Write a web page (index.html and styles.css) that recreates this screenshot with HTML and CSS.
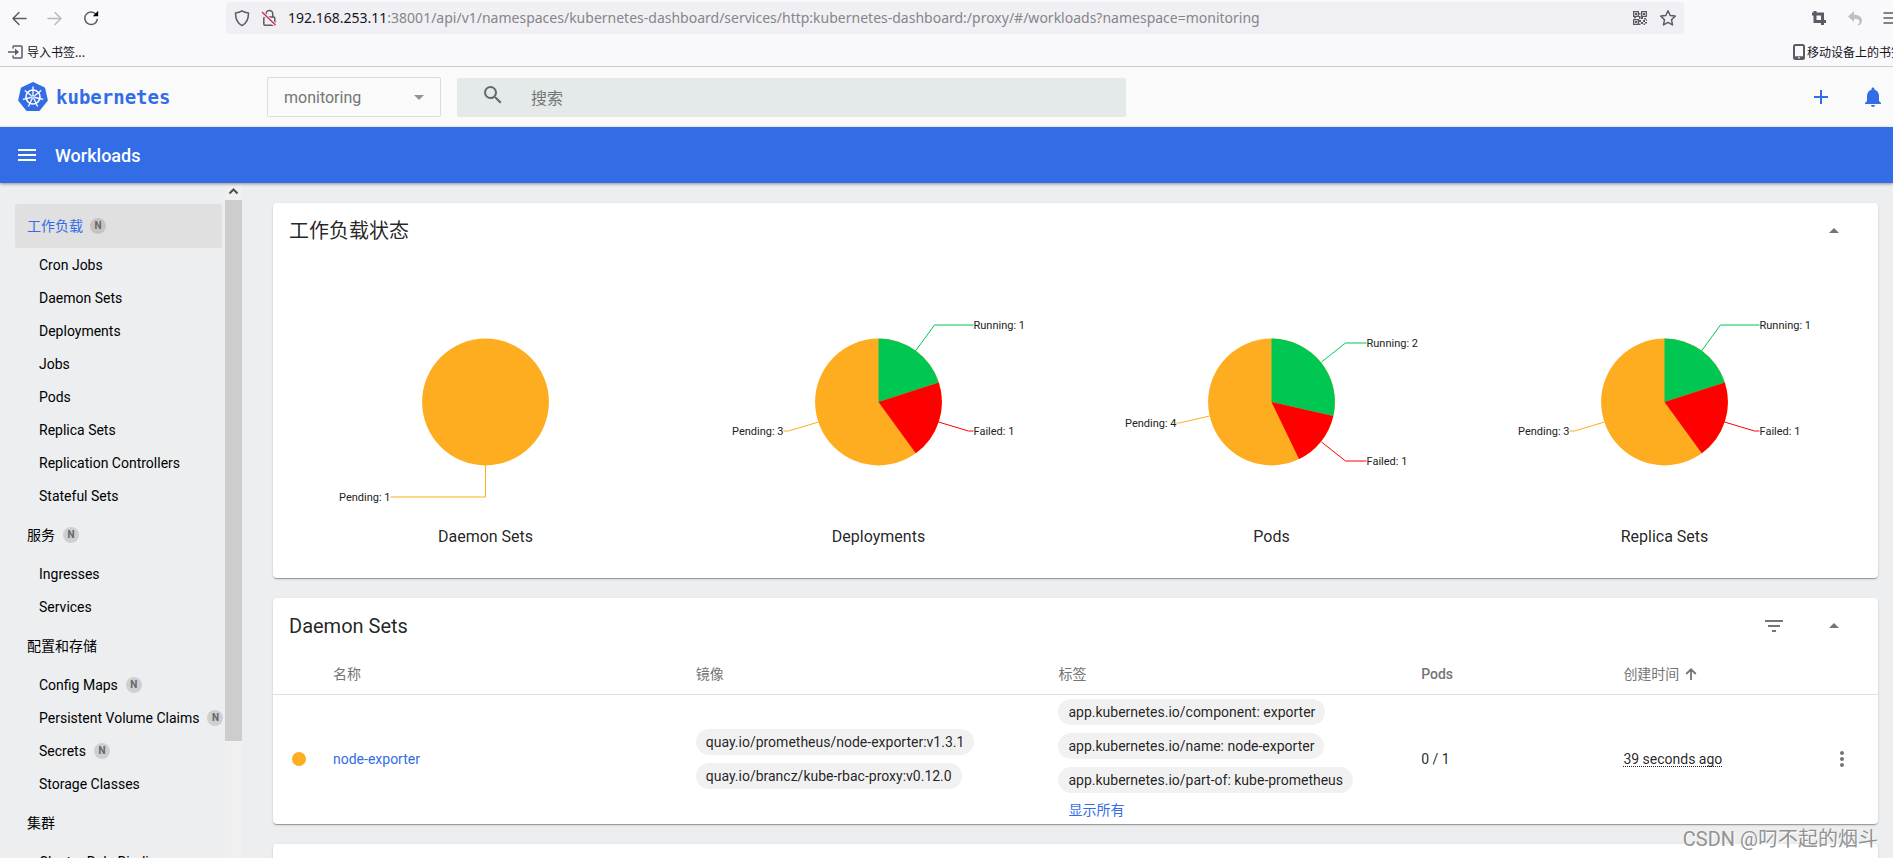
FILE: index.html
```html
<!DOCTYPE html>
<html lang="zh-CN">
<head>
<meta charset="utf-8">
<title>Kubernetes Dashboard</title>
<link rel="stylesheet" href="styles.css">
</head>
<body>
<div class="browser">
  <div class="navbar">
    <div class="nav-buttons">
      <button class="bar-btn" aria-label="后退"><svg width="16" height="16" viewBox="0 0 16 16"><path d="M15 8.500H2M8 2.500l-6 6 6 6" class="line"/></svg></button>
      <button class="bar-btn faded" aria-label="前进"><svg width="16" height="16" viewBox="0 0 16 16"><path d="M1 8.500H14M8 2.500l6 6-6 6" class="line"/></svg></button>
      <button class="bar-btn" aria-label="刷新"><svg width="16" height="16" viewBox="0 0 16 16"><path d="M13 4.200A6.300 6.300 0 1 0 14.300 9.500" class="line"/><path d="M15.200 .8v5.400H9.800z" fill="currentColor"/></svg></button>
    </div>
    <div class="urlbar">
      <svg width="16" height="18" viewBox="0 0 16 18"><path d="M8 1.800c2 1.300 4 1.900 6.500 2.200 0 6-1.700 10.300-6.500 12.700C3.200 14.300 1.500 10 1.500 4 4 3.700 6 3.100 8 1.800z" class="line"/></svg>
      <svg width="16" height="18" viewBox="0 0 16 18"><path d="M5 8V5a3.400 3.400 0 0 1 6.800 0v3" class="line"/><rect x="2.800" y="8" width="11" height="8.300" rx="1.200" class="line"/><path d="M1.200 3.500l13 12.500" stroke="#f0f0f4" stroke-width="3.500"/><path d="M1 3l13.500 13" stroke="#e22850" stroke-width="1.400"/></svg>
      <span class="url"><b>192.168.253.11</b>:38001/api/v1/namespaces/kubernetes-dashboard/services/http:kubernetes-dashboard:/proxy/#/workloads?namespace=monitoring</span>
      <svg width="16" height="16" viewBox="0 0 16 16" class="qr"><path fill="none" stroke="currentColor" stroke-width="1.300" d="M1.650 1.650h4.700v4.700h-4.700zM9.650 1.650h4.700v4.700h-4.700zM1.650 9.650h4.700v4.700h-4.700z"/><path fill="currentColor" d="M3 3h2v2H3zM11 3h2v2h-2zM3 11h2v2H3zM7 3h1.500v1.500H7zM7 6h1.500v3H7zM9 7h2v2H9zM12 8h2v1.500h-2zM7 10h2v2H7zM9 12h2v2H9zM11 10h2v2h-2zM13 12h2v1.500h-2zM7 13.500h1.500V15H7zM11.500 13.500H13V15h-1.500zM14 9.500h1V11h-1zM2 7h2v1.300H2z"/></svg>
      <svg width="18" height="18" viewBox="0 0 18 18"><path d="M9 1.800l2.200 4.700 5 .6-3.700 3.600 1 5.200L9 13.400l-4.500 2.500 1-5.200L1.800 7.100l5-.6z" class="line"/></svg>
    </div>
    <div class="tools">
      <svg width="16" height="16" viewBox="0 0 16 16"><path fill="none" stroke="#5b5b66" stroke-width="3" d="M4 1v10.500h11M1 4h10.500v11"/></svg>
      <svg width="16" height="16" viewBox="0 0 16 16"><path fill="#bfbfc4" d="M7 1v3.800c5 0 8 2.200 8 6 0 1.700-.8 3-2.300 4.200-1 .5-1.700.2-2.200-.2 1.500-.8 2-1.800 2-3 0-2.100-2-3.100-5.500-3.100V12L1 6.500z"/></svg>
      <svg width="16" height="16" viewBox="0 0 16 16"><path d="M1 3h14M1 8h14M1 13h14" class="line"/></svg>
    </div>
  </div>
  <div class="bookmarks">
    <a href="#" class="bookmark"><svg width="15" height="14" viewBox="0 0 15 14"><path d="M5 3V1.800Q5 1 6 1h7q1 0 1 1v10q0 1-1 1H6q-1 0-1-1V11M0 7h7" class="line"/><path d="M7 3.500l4 3.500-4 3.500z" fill="#5b5b66"/></svg>导入书签...</a>
    <a href="#" class="bookmark mobile"><svg width="12" height="16" viewBox="0 0 12 16"><rect x="1" y="1" width="10" height="14" rx="1.500" fill="none" stroke="#5b5b66" stroke-width="2"/><path d="M1 13.500h10" stroke="#5b5b66" stroke-width="2.500"/><path d="M5 13.800h2" stroke="#fff"/></svg>移动设备上的书签</a>
  </div>
</div>

<header class="header">
  <a href="#" class="brand">
    <svg width="30" height="30" viewBox="-15 -15 30 30">
      <path d="M0-13.500L10.700-8.400 13.300 3.100 5.900 12.400H-5.900L-13.300 3.100-10.700-8.400z" fill="#326de6" stroke="#326de6" stroke-width="3" stroke-linejoin="round"/>
      <g stroke="#fff" fill="none" stroke-width="1.300">
        <circle r="7" stroke-width="1.600"/>
        <path d="M0-2V-10.500M1.600-1.200L8.200-6.500M2 .5L10.200 2.300M.9 1.800L4.600 9.500M-.9 1.800L-4.600 9.500M-2 .5L-10.200 2.300M-1.600-1.200L-8.200-6.500"/>
      </g>
      <circle r="1.900" fill="#fff"/><circle r=".8" fill="#326de6"/>
    </svg>
    <span>kubernetes</span>
  </a>
  <div class="namespace">
    <select aria-label="命名空间"><option>monitoring</option></select>
    <svg width="10" height="5" viewBox="0 0 10 5"><path d="M0 0h10L5 5z" fill="#949494"/></svg>
  </div>
  <label class="search">
    <svg width="24" height="24" viewBox="0 0 24 24"><path fill="#666" d="M15.500 14h-.79l-.28-.27A6.470 6.470 0 0 0 16 9.500 6.500 6.500 0 1 0 9.500 16c1.610 0 3.090-.59 4.230-1.570l.27.28v.79l5 4.990L20.490 19l-4.990-5zm-6 0C7.010 14 5 11.990 5 9.500S7.010 5 9.500 5 14 7.010 14 9.500 11.990 14 9.500 14z"/></svg>
    <input type="text" placeholder="搜索" aria-label="搜索">
  </label>
  <div class="actions">
    <button aria-label="新建"><svg width="24" height="24" viewBox="0 0 24 24"><path fill="#326de6" d="M19 13h-6v6h-2v-6H5v-2h6V5h2v6h6v2z"/></svg></button>
    <button aria-label="通知"><svg width="24" height="24" viewBox="0 0 24 24"><path fill="#326de6" d="M12 22c1.100 0 2-.9 2-2h-4c0 1.100.89 2 2 2zm6-6v-5c0-3.070-1.640-5.640-4.500-6.320V4c0-.83-.67-1.500-1.500-1.500s-1.500.67-1.500 1.500v.68C7.630 5.360 6 7.920 6 11v5l-2 2v1h16v-1l-2-2z"/></svg></button>
  </div>
</header>

<div class="titlebar">
  <button aria-label="菜单"><svg width="24" height="24" viewBox="0 0 24 24"><path fill="#fff" d="M3 18h18v-2H3v2zm0-5h18v-2H3v2zm0-7v2h18V6H3z"/></svg></button>
  <h1>Workloads</h1>
</div>

<div class="layout">
  <nav class="sidebar">
    <a href="#" class="section active">工作负载<i class="badge">N</i></a>
    <a href="#" class="item">Cron Jobs</a>
    <a href="#" class="item">Daemon Sets</a>
    <a href="#" class="item">Deployments</a>
    <a href="#" class="item">Jobs</a>
    <a href="#" class="item">Pods</a>
    <a href="#" class="item">Replica Sets</a>
    <a href="#" class="item">Replication Controllers</a>
    <a href="#" class="item">Stateful Sets</a>
    <a href="#" class="section">服务<i class="badge">N</i></a>
    <a href="#" class="item">Ingresses</a>
    <a href="#" class="item">Services</a>
    <a href="#" class="section">配置和存储</a>
    <a href="#" class="item">Config Maps<i class="badge">N</i></a>
    <a href="#" class="item">Persistent Volume Claims<i class="badge">N</i></a>
    <a href="#" class="item">Secrets<i class="badge">N</i></a>
    <a href="#" class="item">Storage Classes</a>
    <a href="#" class="section">集群</a>
    <a href="#" class="item">Cluster Role Bindings</a>
  </nav>
  <div class="scrollbar">
    <svg width="17" height="17" viewBox="0 0 17 17"><path d="M4.500 10.500l4-4 4 4" fill="none" stroke="#505050" stroke-width="2"/></svg>
    <div class="thumb"></div>
  </div>
  <main class="content">
    <section class="card">
      <div class="card-head">
        <h2>工作负载状态</h2>
        <button aria-label="收起"><svg width="24" height="24" viewBox="0 0 24 24"><path fill="#757575" d="M7 14l5-5 5 5z"/></svg></button>
      </div>
      <div class="charts">
        <figure>
          <svg class="pie" viewBox="-160 -111 320 222">
            <circle r="63.400" class="pending"/>
            <path class="lead l-pending" d="M0 63V95H-95"/>
            <text x="-95" y="99" text-anchor="end">Pending: 1</text>
          </svg>
          <figcaption>Daemon Sets</figcaption>
        </figure>
        <figure>
          <svg class="pie" viewBox="-160 -111 320 222">
            <circle r="63.400" class="pending"/>
            <path class="running" d="M0 0V-63.400A63.400 63.400 0 0 1 60.300-19.590z"/>
            <path class="failed" d="M0 0L60.300-19.590A63.400 63.400 0 0 1 37.270 51.290z"/>
            <path class="lead l-running" d="M37-51L56-77H95"/>
            <path class="lead l-failed" d="M60 20L90 29H95"/>
            <path class="lead l-pending" d="M-60 20L-90 29H-95"/>
            <text x="95" y="-73">Running: 1</text>
            <text x="95" y="33">Failed: 1</text>
            <text x="-95" y="33" text-anchor="end">Pending: 3</text>
          </svg>
          <figcaption>Deployments</figcaption>
        </figure>
        <figure>
          <svg class="pie" viewBox="-160 -111 320 222">
            <circle r="63.400" class="pending"/>
            <path class="running" d="M0 0V-63.400A63.400 63.400 0 0 1 61.810 14.110z"/>
            <path class="failed" d="M0 0L61.810 14.110A63.400 63.400 0 0 1 27.510 57.120z"/>
            <path class="lead l-running" d="M50-40L74-59H95"/>
            <path class="lead l-failed" d="M50 40L74 59H95"/>
            <path class="lead l-pending" d="M-62 14L-92 21H-95"/>
            <text x="95" y="-55">Running: 2</text>
            <text x="95" y="63">Failed: 1</text>
            <text x="-95" y="25" text-anchor="end">Pending: 4</text>
          </svg>
          <figcaption>Pods</figcaption>
        </figure>
        <figure>
          <svg class="pie" viewBox="-160 -111 320 222">
            <circle r="63.400" class="pending"/>
            <path class="running" d="M0 0V-63.400A63.400 63.400 0 0 1 60.300-19.590z"/>
            <path class="failed" d="M0 0L60.300-19.590A63.400 63.400 0 0 1 37.270 51.290z"/>
            <path class="lead l-running" d="M37-51L56-77H95"/>
            <path class="lead l-failed" d="M60 20L90 29H95"/>
            <path class="lead l-pending" d="M-60 20L-90 29H-95"/>
            <text x="95" y="-73">Running: 1</text>
            <text x="95" y="33">Failed: 1</text>
            <text x="-95" y="33" text-anchor="end">Pending: 3</text>
          </svg>
          <figcaption>Replica Sets</figcaption>
        </figure>
      </div>
    </section>

    <section class="card">
      <div class="card-head">
        <h2>Daemon Sets</h2>
        <button aria-label="筛选"><svg width="24" height="24" viewBox="0 0 24 24"><path fill="#757575" d="M10 18h4v-2h-4v2zM3 6v2h18V6H3zm3 7h12v-2H6v2z"/></svg></button>
        <button aria-label="收起"><svg width="24" height="24" viewBox="0 0 24 24"><path fill="#757575" d="M7 14l5-5 5 5z"/></svg></button>
      </div>
      <table>
        <colgroup><col class="c-icon"><col class="c-wide"><col class="c-wide"><col class="c-wide"><col class="c-mid"><col><col class="c-menu"></colgroup>
        <thead>
          <tr><th></th><th>名称</th><th>镜像</th><th>标签</th><th class="latin">Pods</th><th><span class="sort">创建时间<svg width="12" height="12" viewBox="0 0 12 12"><path d="M6 12V1.500M1.200 6L6 1.300 10.800 6" fill="none" stroke="#757575" stroke-width="1.800"/></svg></span></th><th></th></tr>
        </thead>
        <tbody>
          <tr>
            <td class="status"><span class="dot"></span></td>
            <td><a href="#">node-exporter</a></td>
            <td><div class="chips"><span class="chip">quay.io/prometheus/node-exporter:v1.3.1</span><span class="chip">quay.io/brancz/kube-rbac-proxy:v0.12.0</span></div></td>
            <td><div class="chips"><span class="chip">app.kubernetes.io/component: exporter</span><span class="chip">app.kubernetes.io/name: node-exporter</span><span class="chip">app.kubernetes.io/part-of: kube-prometheus</span></div><a href="#" class="show-all">显示所有</a></td>
            <td>0 / 1</td>
            <td><span class="age">39 seconds ago</span></td>
            <td class="menu"><button aria-label="更多"><svg width="24" height="24" viewBox="0 0 24 24"><path fill="#757575" d="M12 8c1.100 0 2-.9 2-2s-.9-2-2-2-2 .9-2 2 .9 2 2 2zm0 2c-1.100 0-2 .9-2 2s.9 2 2 2 2-.9 2-2-.9-2-2-2zm0 6c-1.100 0-2 .9-2 2s.9 2 2 2 2-.9 2-2-.9-2-2-2z"/></svg></button></td>
          </tr>
        </tbody>
      </table>
    </section>

    <section class="card"><div class="card-head"></div></section>
  </main>
</div>
<div class="watermark">CSDN @叼不起的烟斗</div>
</body>
</html>
```
FILE: styles.css
```css
* { box-sizing: border-box; }
body {
  margin: 0;
  height: 100vh;
  overflow: hidden;
  display: flex;
  flex-direction: column;
  font: 14px/20px Roboto, "Noto Sans CJK SC", sans-serif;
  color: rgba(0, 0, 0, .87);
  background: #eceef0;
}
button { border: 0; padding: 0; background: none; display: flex; align-items: center; justify-content: center; }
a { color: #326de6; text-decoration: none; }
svg { display: block; flex: none; }
h1, h2, figure { margin: 0; font-weight: 400; }
.line { fill: none; stroke: #5b5b66; stroke-width: 1.5; stroke-linecap: round; stroke-linejoin: round; }

/* browser chrome */
.browser { flex: none; background: #f9f9fb; border-bottom: 1px solid #ccc; overflow: hidden; }
.navbar { display: flex; align-items: center; height: 36px; }
.nav-buttons { display: flex; gap: 20px; padding-left: 11px; width: 226px; color: #5b5b66; }
.faded { opacity: .4; }
.urlbar { display: flex; align-items: center; gap: 11px; flex: 1; height: 32px; padding: 0 7px 0 8px; margin-right: 127px; background: #f0f0f4; border-radius: 4px; color: #5b5b66; }
.url { flex: 1; font: 14px/20px "Noto Sans", sans-serif; color: #85858a; white-space: nowrap; overflow: hidden; }
.url b { font-weight: 400; color: #15141a; }
.tools { display: flex; gap: 20px; margin-right: -6px; }
.bookmarks { display: flex; justify-content: space-between; height: 30px; padding: 2px 0 0 8px; }
.bookmark { display: flex; align-items: center; gap: 4px; font: 12px/16px "Noto Sans CJK SC", sans-serif; color: #15141a; white-space: nowrap; }
.mobile { gap: 2px; margin-right: -10px; }

/* application header */
.header { flex: none; display: flex; align-items: center; height: 60px; padding: 0 8px 0 18px; background: #fafafa; }
.brand { display: flex; align-items: center; gap: 8px; width: 249px; font: bold 19px/24px "DejaVu Sans Mono", monospace; }
.namespace { position: relative; width: 174px; }
.namespace select { display: block; width: 100%; height: 40px; padding: 2px 16px 0; border: 1px solid #dcdcdc; border-radius: 2px; background: #fafafa; appearance: none; font: 16px/20px Roboto, sans-serif; color: #757575; }
.namespace svg { position: absolute; right: 17px; top: 18px; }
.search { display: flex; align-items: flex-start; gap: 26px; width: 669px; height: 39px; margin-left: 16px; padding: 5px 0 0 24px; background: #e4e9e9; border-radius: 2px; }
.search input { flex: 1; height: 32px; border: 0; padding: 0; background: none; outline: none; font: 16px/24px Roboto, "Noto Sans CJK SC", sans-serif; color: #333; }
.search input::placeholder { color: #757575; opacity: 1; }
.actions { display: flex; gap: 28px; margin-left: auto; }
.titlebar { flex: none; position: relative; z-index: 1; display: flex; align-items: center; gap: 16px; height: 56px; padding-left: 15px; background: #326de6; box-shadow: 0 1px 3px rgba(0, 0, 0, .4); }
.titlebar h1 { padding-top: 2px; font-size: 18px; line-height: 24px; font-weight: 500; color: #fff; }

/* sidebar */
.layout { flex: 1; min-height: 0; display: flex; }
.sidebar { flex: none; width: 225px; padding: 21px 0 0 15px; overflow: hidden; }
.sidebar a { display: flex; align-items: center; gap: 8px; white-space: nowrap; color: #000; }
.section { height: 45px; width: 207px; padding-left: 12px; }
.item { height: 33px; padding-left: 24px; }
.sidebar .active { height: 44px; gap: 7px; color: #326de6; background: #e0e0e0; border-radius: 2px; }
.badge { flex: none; width: 16px; height: 16px; border-radius: 50%; background: rgba(0, 0, 0, .13); font: 700 10px/16px Roboto, sans-serif; text-align: center; color: #666; }
.scrollbar { flex: none; width: 17px; background: #f0f0f0; }
.scrollbar .thumb { height: calc((100% - 17px) * .822); background: #cdcdcd; }

/* cards */
.content { flex: 1; min-width: 0; padding: 20px 15px 0 31px; overflow: hidden; }
.card { margin-bottom: 20px; background: #fff; border-radius: 4px; box-shadow: 0 2px 1px -1px rgba(0, 0, 0, .2), 0 1px 1px rgba(0, 0, 0, .14), 0 1px 3px rgba(0, 0, 0, .12); }
.card-head { display: flex; align-items: center; gap: 20px; height: 56px; padding: 0 24px 0 16px; }
.card-head h2 { flex: 1; font-size: 20px; line-height: 28px; }
.card-head button { width: 40px; height: 40px; }
.charts { display: grid; grid-template-columns: repeat(4, 1fr); padding: 32px 17px 29px 16px; }
.pie { width: 100%; height: 222px; font-size: 11px; fill: #222; }
.pending { fill: #ffad20; }
.running { fill: #00c752; }
.failed { fill: #f00; }
.lead { fill: none; stroke-width: 1; }
.l-pending { stroke: #ffad20; }
.l-running { stroke: #00c752; }
.l-failed { stroke: #f00; }
figcaption { margin-top: 12px; font-size: 16px; line-height: 24px; text-align: center; }

/* table */
table { width: 100%; table-layout: fixed; border-collapse: collapse; }
.c-icon { width: 60px; }
.c-wide { width: 22.6%; }
.c-mid { width: 12.6%; }
.c-menu { width: 53px; }
th { height: 40px; padding: 0; border-bottom: 1px solid #e0e0e0; text-align: left; font-weight: 400; color: #757575; }
.latin { font-weight: 500; }
.sort { display: flex; align-items: center; gap: 6px; }
td { padding: 0; }
.status { padding-left: 19px; }
.dot { display: block; width: 14px; height: 14px; border-radius: 50%; background: #ffad20; }
.chips { display: flex; flex-direction: column; align-items: flex-start; gap: 8px; padding: 4px 0; }
.chip { padding: 0 10px; border-radius: 13px; background: #f1f1f1; line-height: 26px; white-space: nowrap; }
.show-all { display: block; padding: 0 0 1px 10px; line-height: 26px; }
.age { border-bottom: 1px dotted #222; line-height: 14px; display: inline-block; }
.menu button { width: 34px; height: 40px; }

.watermark { position: absolute; right: 15px; bottom: 5px; font: 20px/28px Roboto, "Noto Sans CJK SC", sans-serif; color: #929292; text-shadow: 1px 1px 0 #fff; }
```
